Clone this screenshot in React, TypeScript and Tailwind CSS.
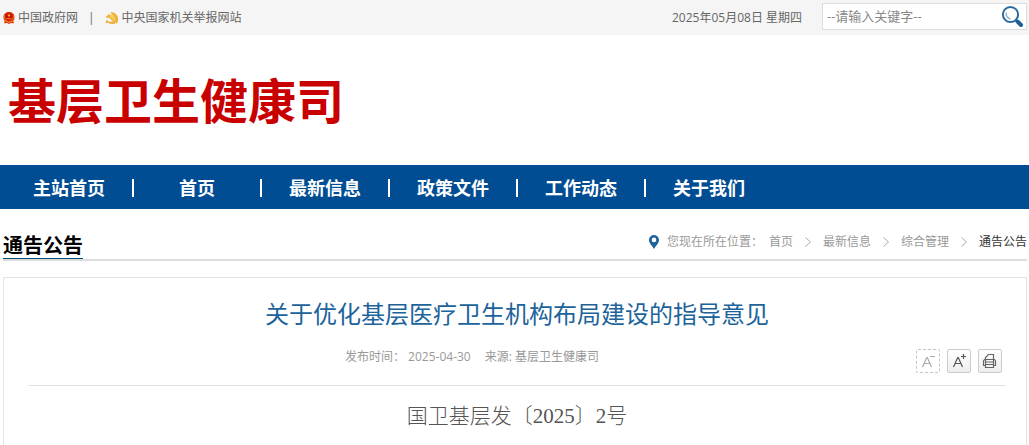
import React from "react"

type NavItem = {
  label: string
  href: string
}

const navItems: NavItem[] = [
  { label: "主站首页", href: "#main" },
  { label: "首页", href: "#home" },
  { label: "最新信息", href: "#news" },
  { label: "政策文件", href: "#policy" },
  { label: "工作动态", href: "#work" },
  { label: "关于我们", href: "#about" },
]

const crumbs: NavItem[] = [
  { label: "首页", href: "#home" },
  { label: "最新信息", href: "#news" },
  { label: "综合管理", href: "#general" },
]

const EmblemIcon = () => (
  <svg className="h-3 w-3" viewBox="0 0 12 12" aria-hidden="true">
    <path d="M6 0C3 0 .5 2 .5 5c0 2 .5 3 1.200 4l-.7 2.200L4 11l2 1 2-1 3 .2L10.300 9c.7-1 1.200-2 1.200-4 0-3-2.500-5-5.500-5Z" fill="#d9320f" />
    <circle cx="6" cy="4.800" r="3.600" fill="#c40d08" />
    <path d="m6 1.800.5 1 1.100.2-.8.8.2 1-1-.5-1 .5.2-1-.8-.8 1.100-.2Z" fill="#ffb62c" />
    <path d="M3.400 6.200h5.200v1H3.400zM2.500 8.600 6 9.800l3.500-1.200v1L6 10.700 2.500 9.600Z" fill="#f79a22" />
    <path d="M1.800 3.500c-.5 2 0 4 1.200 5.200M10.200 3.500c.5 2 0 4-1.200 5.200" fill="none" stroke="#f2852a" strokeWidth="0.7" />
  </svg>
)

const ReportIcon = () => (
  <svg className="h-3 w-3.5" viewBox="0 0 14 12" aria-hidden="true">
    <path d="M5.500.3C10 .3 13.300 3.300 12.900 8c-.1 1.300-.5 2.400-1.100 3.400L4.200 4.200 6.600 3Z" fill="#f5ce62" />
    <path d="M5.500.3C10 .3 13.300 3.300 12.900 8c-.1 1.300-.5 2.400-1.100 3.400l-1.600-1.600C11 6 9 2.500 5.500.3Z" fill="#eeae30" />
    <path d="M.8 4.800 4.200 2l1.600 1.500-1 .9 6 5.500-1.100 1.200-6.100-5.600-1.300 1Z" fill="#f0b53a" />
    <path d="M1.800 7.900c1.700 2 4.400 2.500 7.100 1.400l1.800 2c-3.300 1.100-6.200.7-8.200-1.100l-1.100 1-1-1Z" fill="#efaa36" />
  </svg>
)

const SearchIcon = () => (
  <svg className="h-6 w-6" viewBox="0 0 24 24" fill="none" aria-hidden="true">
    <circle cx="10.500" cy="9.500" r="7.600" stroke="#2b6a9e" strokeWidth="2" />
    <path d="M6.300 7.500c-.7 3 1 6 4.200 6.500" stroke="#8fb3cf" strokeWidth="1.500" />
    <path d="m15.500 15 2 2" stroke="#2b6a9e" strokeWidth="2" />
    <path d="m17.500 16.500 3.500 3.500" stroke="#1f5f96" strokeWidth="4" strokeLinecap="round" />
  </svg>
)

const PinIcon = () => (
  <svg className="mr-2 h-3.5 w-2.5" viewBox="0 0 10 14" aria-hidden="true">
    <path d="M5 0a5 5 0 0 0-5 5c0 3.500 3.500 6 5 9 1.500-3 5-5.500 5-9a5 5 0 0 0-5-5Zm0 2.600a2.300 2.300 0 1 1 0 4.600 2.300 2.300 0 0 1 0-4.600Z" fill="#20639b" />
  </svg>
)

const Chevron = () => (
  <svg className="h-2.5 w-1.5" viewBox="0 0 6 10" fill="none" aria-hidden="true">
    <path d="m.5.5 5 4.500-5 4.500" stroke="#aaa" />
  </svg>
)

const LetterIcon = ({ larger }: { larger?: boolean }) => (
  <svg className="h-6 w-6" viewBox="0 0 24 24" fill="none" stroke="currentColor" aria-hidden="true">
    <path d="m6.500 18 4.200-9.500h.6L15.500 18M8 14.500h6" strokeWidth="1.200" />
    <path d={larger ? "M14 7.500h5M16.500 5v5" : "M14 7.500h5"} strokeWidth={larger ? 1.2 : 1} />
  </svg>
)

const PrintIcon = () => (
  <svg className="h-6 w-6" viewBox="0 0 24 24" fill="none" stroke="#666" strokeWidth="1.200" aria-hidden="true">
    <path d="M7.500 10.500V8.500l3-3h5v5" />
    <path d="M7.500 10.500h-1l-1 1.500v4.500h2M15.500 10.500h1l1 1.500v4.500h-2" />
    <path d="M7.500 10.500h8v8h-8ZM7.500 13h8M7.500 15.500h8" />
  </svg>
)

const TopBar = () => (
  <div className="flex h-[35px] items-center justify-between bg-[#f5f5f5] pr-0.5 pl-[3px] text-xs text-[#666]">
    <div className="flex items-center">
      <a href="#gov" className="flex items-center gap-[3px]">
        <EmblemIcon />
        中国政府网
      </a>
      <span className="mx-2.5">|</span>
      <a href="#report" className="flex items-center gap-[3px]">
        <ReportIcon />
        中央国家机关举报网站
      </a>
    </div>
    <div className="flex items-center gap-5">
      <span>2025年05月08日 星期四</span>
      <form className="mb-0.5 flex h-[27px] w-[205px] items-center border border-[#ddd] bg-white pr-0.5 pl-1">
        <input
          type="text"
          aria-label="请输入关键字"
          placeholder="--请输入关键字--"
          className="min-w-0 flex-1 text-[13px] outline-none placeholder:text-[#888]"
        />
        <button type="button" aria-label="搜索">
          <SearchIcon />
        </button>
      </form>
    </div>
  </div>
)

const MainNav = () => (
  <nav className="flex h-11 items-center bg-[#004d93] pt-0.5 pl-1.5 text-lg font-bold text-white">
    {navItems.map((item, i) => (
      <React.Fragment key={item.label}>
        {i > 0 && <span className="h-[18px] w-0.5 bg-white" />}
        <a href={item.href} className="w-[126px] text-center">
          {item.label}
        </a>
      </React.Fragment>
    ))}
  </nav>
)

const SectionHeader = () => (
  <div className="mr-0.5 ml-[3px] mt-5 flex h-8 items-end justify-between border-b-2 border-[#ddd]">
    <h2 className="border-b border-[#004d73] text-xl leading-6 font-bold text-black">通告公告</h2>
    <div className="flex h-full items-center pb-1 text-xs whitespace-nowrap text-[#999]">
      <PinIcon />
      <span className="mr-1.5">您现在所在位置：</span>
      <div className="flex items-center gap-3">
        {crumbs.map((crumb) => (
          <React.Fragment key={crumb.label}>
            <a href={crumb.href}>{crumb.label}</a>
            <Chevron />
          </React.Fragment>
        ))}
        <span className="text-[#333]">通告公告</span>
      </div>
    </div>
  </div>
)

const Article = () => (
  <article className="mr-0.5 ml-[3px] mt-4 min-h-[168px] border border-b-0 border-[#e2e2e2] pt-[18px] pr-5 pl-6">
    <h3 className="text-center text-2xl leading-9 text-[#20639b]">关于优化基层医疗卫生机构布局建设的指导意见</h3>
    <div className="flex items-center border-b border-[#e2e2e2] pt-[17px] pr-1 pb-3">
      <div className="flex flex-1 justify-center gap-3.5 pb-2 text-xs text-[#999]">
        <span>发布时间： 2025-04-30</span>
        <span>来源: 基层卫生健康司</span>
      </div>
      <div className="flex gap-[7px]">
        <button
          type="button"
          aria-label="缩小字体"
          className="rounded-xs border border-dashed border-[#c4c4c4] text-[#aaa]"
        >
          <span className="-m-px block">
            <LetterIcon />
          </span>
        </button>
        <button
          type="button"
          aria-label="放大字体"
          className="rounded-xs border border-[#ccc] bg-linear-to-b from-white to-[#eee] text-[#555]"
        >
          <span className="-m-px block">
            <LetterIcon larger />
          </span>
        </button>
        <button
          type="button"
          aria-label="打印"
          className="rounded-xs border border-[#ccc] bg-linear-to-b from-white to-[#eee]"
        >
          <span className="-m-px block">
            <PrintIcon />
          </span>
        </button>
      </div>
    </div>
    <p className="pt-3.5 text-center font-['Liberation_Serif','Noto_Sans_CJK_SC',serif] text-[21px] leading-8 font-light text-[#555]">
      国卫基层发〔2025〕2号
    </p>
  </article>
)

const App = () => {
  return (
    <div className="bg-white font-['Open_Sans','Noto_Sans_CJK_SC',sans-serif]">
      <TopBar />
      <header className="flex h-[130px] items-center px-2 pt-0.5">
        <h1 className="text-5xl font-bold text-[#c80000]">基层卫生健康司</h1>
      </header>
      <MainNav />
      <SectionHeader />
      <Article />
    </div>
  )
}

export default App
